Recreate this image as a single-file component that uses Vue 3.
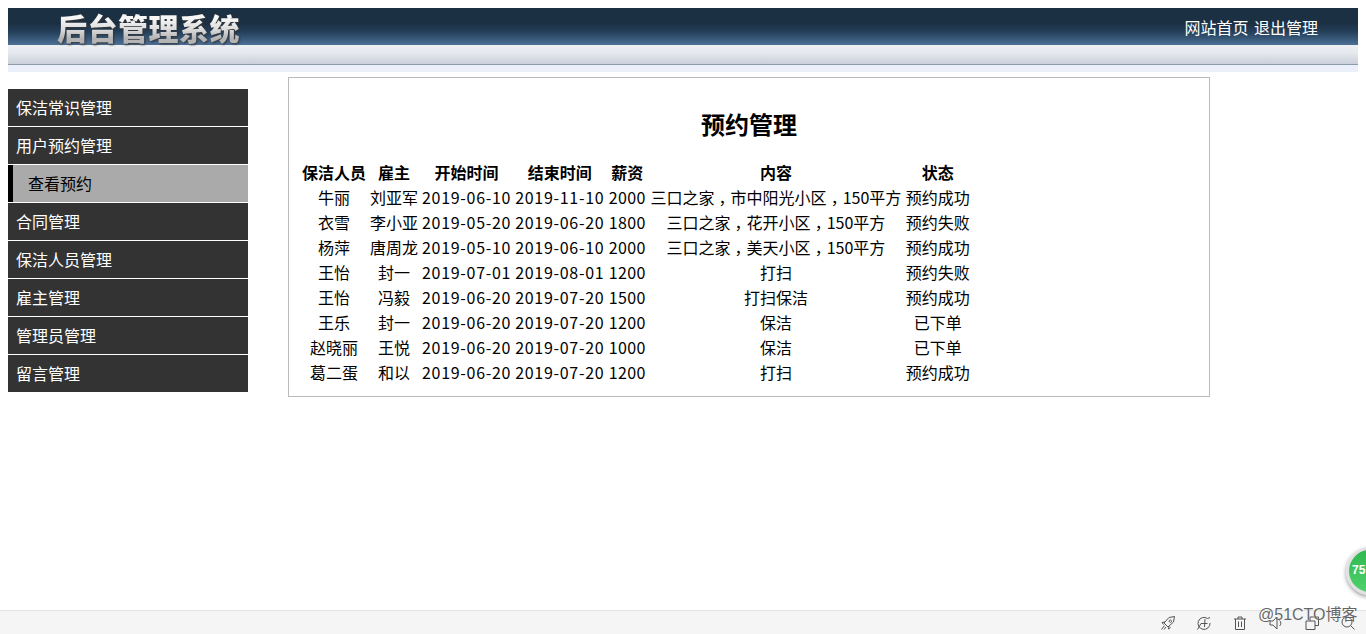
<script setup>
const menu = [
  { label: '保洁常识管理' },
  { label: '用户预约管理' },
  { label: '查看预约', sub: true },
  { label: '合同管理' },
  { label: '保洁人员管理' },
  { label: '雇主管理' },
  { label: '管理员管理' },
  { label: '留言管理' }
]
const heads = ['保洁人员', '雇主', '开始时间', '结束时间', '薪资', '内容', '状态']
const rows = [
  ['牛丽', '刘亚军', '2019-06-10', '2019-11-10', '2000', '三口之家，市中阳光小区，150平方', '预约成功'],
  ['衣雪', '李小亚', '2019-05-20', '2019-06-20', '1800', '三口之家，花开小区，150平方', '预约失败'],
  ['杨萍', '唐周龙', '2019-05-10', '2019-06-10', '2000', '三口之家，美天小区，150平方', '预约成功'],
  ['王怡', '封一', '2019-07-01', '2019-08-01', '1200', '打扫', '预约失败'],
  ['王怡', '冯毅', '2019-06-20', '2019-07-20', '1500', '打扫保洁', '预约成功'],
  ['王乐', '封一', '2019-06-20', '2019-07-20', '1200', '保洁', '已下单'],
  ['赵晓丽', '王悦', '2019-06-20', '2019-07-20', '1000', '保洁', '已下单'],
  ['葛二蛋', '和以', '2019-06-20', '2019-07-20', '1200', '打扫', '预约成功']
]
// Split on the full-width comma so it can be centred in its em box
const parts = (text) => text.split('，')
</script>

<template>
  <div class="page">
    <header class="top">
      <div class="banner">
        <span class="logo">后台管理系统</span>
        <nav class="links"><a>网站首页</a> <a>退出管理</a></nav>
      </div>
      <div class="strip"></div>
      <div class="pale"></div>
    </header>
    <div class="body">
      <aside class="side">
        <div v-for="m in menu" :key="m.label" class="item" :class="{ sub: m.sub }">{{ m.label }}</div>
      </aside>
      <main class="box">
        <h2 class="title">预约管理</h2>
        <table class="tbl">
          <thead>
            <tr><th v-for="h in heads" :key="h">{{ h }}</th></tr>
          </thead>
          <tbody>
            <tr v-for="(r, i) in rows" :key="i">
              <td v-for="(c, j) in r" :key="j">
                <template v-for="(p, k) in parts(c)" :key="k"><span v-if="k > 0" class="comma">，</span>{{ p }}</template>
              </td>
            </tr>
          </tbody>
        </table>
      </main>
    </div>
    <footer class="bar">
      <svg class="ic" viewBox="0 0 16 16"><path d="M14.500 1.500 9 2.500 4 8l4 4 5.500-5zM10 5a1.200 1.200 0 1 0 1.500 1.500A1.200 1.200 0 0 0 10 5M5 7 2 7.500l1.500 2M9 11l-.5 3 2-1.500M4.500 10.500 1.500 14.500M6 12l-2 2.500" /></svg>
      <svg class="ic" viewBox="0 0 16 16"><path d="M14 2.500 11.500 3.500A6 6 0 1 0 14 8M1.500 14.500 5 8.500h6.500M9 4l-.5 8" /></svg>
      <svg class="ic" viewBox="0 0 16 16"><path d="M2 4h12M6 4V2h4v2M3.500 4v10.500h9V4M6.500 6.500v5.500M9.500 6.500v5.500" /></svg>
      <svg class="ic" viewBox="0 0 16 16"><path d="M9 2v12L5 10H2V6h3zM11.500 5.500a3.500 3.500 0 0 1 0 5.500" /></svg>
      <svg class="ic" viewBox="0 0 16 16"><path d="M2 6h9v8.500H2zM6 6V2h8.500v8.500H11" /></svg>
      <svg class="ic last" viewBox="0 0 16 16"><circle cx="7" cy="7" r="5" /><path d="m10.500 10.500 4 4" /></svg>
    </footer>
    <div class="ball"><span>75</span></div>
    <div class="mark">@51CTO博客</div>
  </div>
</template>

<style scoped>
.page {
  position: relative;
  width: 1366px;
  height: 634px;
  box-sizing: border-box;
  padding-top: 8px;
  display: flex;
  flex-direction: column;
  overflow: hidden;
  font-family: "Noto Sans CJK SC", "Liberation Sans", sans-serif;
  font-size: 16px;
  color: #000;
  background: #fff;
}
.top { margin: 0 8px; }
.banner {
  height: 37px;
  display: flex;
  align-items: center;
  justify-content: space-between;
  padding: 0 40px 0 49px;
  background: linear-gradient(#1c3043 0, #1c3043 42%, #24405a 65%, #4d7097 100%);
}
.logo {
  margin-top: 2px;
  font-size: 30px;
  line-height: 37px;
  font-weight: 900;
  letter-spacing: 0.5px;
  color: transparent;
  background: linear-gradient(#f6f6f6 25%, #dcdcdc 55%, #b4b4b4 80%);
  -webkit-background-clip: text;
  background-clip: text;
  filter: drop-shadow(1px 1px 1px #333);
}
.links { margin-top: 2px; color: #fff; font-size: 16px; line-height: 37px; word-spacing: 2px; }
.strip {
  height: 20px;
  background: linear-gradient(#eef0f4 0, #e6e9ee 40%, #c9d0da 100%);
  border-bottom: 1px solid #8f9cab;
  box-sizing: border-box;
}
.pale { height: 7px; background: #eaeff9; }
.body { display: flex; align-items: flex-start; margin-top: 5px; padding-left: 8px; }
.side { width: 240px; margin-top: 12px; }
.item {
  height: 37px;
  margin-bottom: 1px;
  padding-left: 8px;
  line-height: 37px;
  background: #333;
  color: #fff;
}
.item.sub {
  background: #aaa;
  color: #000;
  border-left: 5px solid #000;
  padding-left: 15px;
}
.box {
  width: 920px;
  height: 318px;
  margin-left: 40px;
  border: 1px solid #bbb;
}
.title {
  margin: 31px 0 20px;
  text-align: center;
  font-size: 24px;
  line-height: 30px;
  font-weight: 700;
}
.tbl {
  margin-left: 10px;
  border-spacing: 2px;
  line-height: 23px;
}
.tbl th, .tbl td { padding: 0 1px; text-align: center; white-space: nowrap; }
.tbl td:nth-child(3), .tbl td:nth-child(4) { letter-spacing: 0.7px; }
.tbl td:nth-child(5) { letter-spacing: 0.3px; }
.tbl th:nth-child(5), .tbl td:nth-child(5), .tbl th:nth-child(6), .tbl td:nth-child(6) { padding: 0 1.5px; }
.comma { font-feature-settings: "halt"; padding: 0 4px; }
.bar {
  margin-top: auto;
  height: 24px;
  box-sizing: border-box;
  border-top: 1px solid #e4e4e4;
  background: #f5f5f5;
  display: flex;
  align-items: center;
  justify-content: flex-end;
  gap: 20px;
}
.ic { width: 16px; height: 16px; fill: none; stroke: #555; stroke-width: 1; flex: none; }
.ic.last { margin-right: 10px; }
.ball {
  position: absolute;
  left: 1346px;
  top: 547px;
  width: 48px;
  height: 48px;
  border-radius: 50%;
  box-sizing: border-box;
  border: 3px solid #e2e2e2;
  background: linear-gradient(#2fb850, #4fd26c);
  box-shadow: 0 2px 4px rgba(0,0,0,.4);
  color: #fff;
  font: 700 12px/40px "Liberation Sans", sans-serif;
  padding-left: 3px;
}
.mark {
  position: absolute;
  left: 1258px;
  top: 605px;
  color: rgba(60,60,60,.8);
  font-family: "Liberation Sans", "Noto Sans CJK SC", sans-serif;
  font-size: 16px;
  line-height: 20px;
  text-shadow: 0 0 1px #fff;
}
</style>
